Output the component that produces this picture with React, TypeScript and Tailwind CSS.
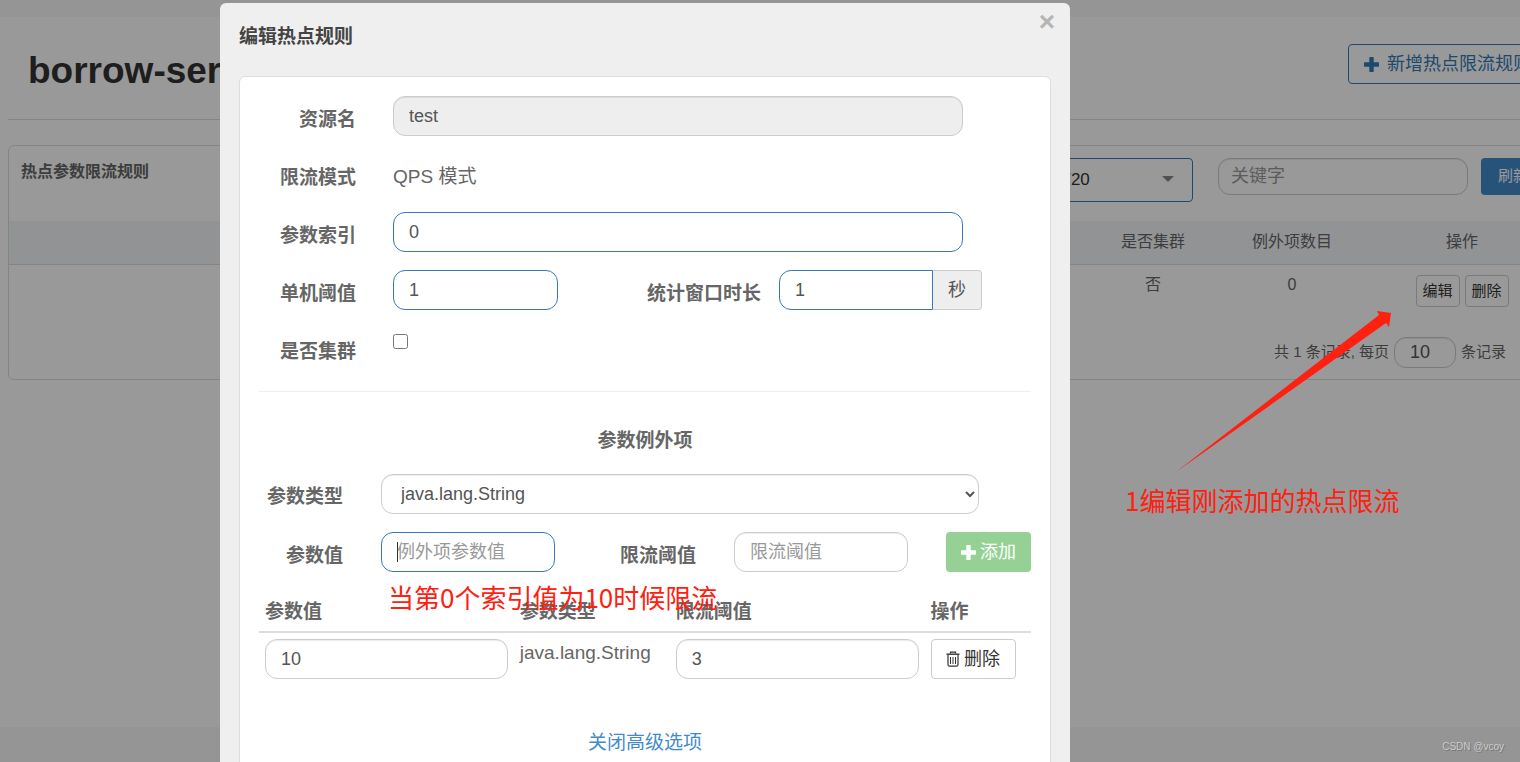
import type { FC, ReactNode } from "react";

const control =
  "h-10 rounded-xl border bg-white px-[15px] text-lg leading-6 text-[#555] outline-none placeholder:text-[#999]";
const plain = "border-[#ccc] shadow-[inset_0_1px_1px_rgba(0,0,0,0.075)]";
const active = "border-[#337ab7]";

const PlusIcon: FC = () => (
  <svg className="size-[15px] shrink-0" viewBox="0 0 15 15" fill="currentColor">
    <path d="M6 0h3a.7.7 0 0 1 .7.7v4.600h4.600a.7.7 0 0 1 .7.7v3a.7.7 0 0 1-.7.7H9.700v4.600a.7.7 0 0 1-.7.7H6a.7.7 0 0 1-.7-.7V9.700H.7A.7.7 0 0 1 0 9V6a.7.7 0 0 1 .7-.7h4.600V.7A.7.7 0 0 1 6 0z" />
  </svg>
);

const TrashIcon: FC = () => (
  <svg
    className="h-4 w-3.5 shrink-0"
    viewBox="0 0 14 16"
    fill="none"
    stroke="currentColor"
  >
    <path d="M4.500 2.500V1.200h5v1.300" strokeWidth="1.200" />
    <path d="M0.500 3.200h13" strokeWidth="1.400" />
    <path d="M2 4v9.700q0 1.500 1.500 1.500h7q1.500 0 1.500-1.500V4" strokeWidth="1.200" />
    <path d="M4.500 6v7M7 6v7M9.500 6v7" />
  </svg>
);

interface FormRowProps {
  label: string;
  htmlFor?: string;
  children: ReactNode;
}

const FormRow: FC<FormRowProps> = ({ label, htmlFor, children }) => (
  <div className="flex min-h-10 items-start gap-[37px]">
    <label
      htmlFor={htmlFor}
      className="w-[97px] shrink-0 pt-3 text-right font-bold"
    >
      {label}
    </label>
    {children}
  </div>
);

const RulesPage: FC = () => (
  <div className="h-full bg-[#f8f8f8] pt-[17px] pb-[35px]">
    <div className="h-full bg-white pl-2">
      <div className="-mr-[38px]">
        <header className="flex items-center justify-between border-b border-[#ddd] px-5 pt-[27px] pb-[35px]">
          <h1 className="h-10 text-[37px] leading-[54px] font-bold text-[#333]">
            borrow-service
          </h1>
          <button
            type="button"
            className="-mr-[9px] flex h-10 items-center gap-2 rounded border border-[#337ab7] px-[15px] text-lg text-[#337ab7]"
          >
            <PlusIcon />
            新增热点限流规则
          </button>
        </header>

        <section className="mt-[25px] rounded-md border border-[#ddd] text-base text-[#666]">
          <div className="flex h-[75px] items-start px-3 pt-3">
            <h2 className="mr-auto leading-7 font-bold">热点参数限流规则</h2>
            <div className="relative mr-[25px]">
              <select
                aria-label="机器"
                className="h-11 w-40 appearance-none rounded-sm border border-[#337ab7] pl-[18px] text-[17px] text-[#333]"
              >
                <option>8720</option>
              </select>
              <svg
                className="absolute top-[18px] right-[19px] h-1.5 w-3"
                viewBox="0 0 12 6"
                fill="#888"
              >
                <path d="M0 0h12L6 6z" />
              </svg>
            </div>
            <input
              aria-label="关键字"
              placeholder="关键字"
              className="mr-[13px] h-[37px] w-[250px] rounded-xl border border-[#ccc] px-3 text-lg shadow-[inset_0_1px_1px_rgba(0,0,0,0.075)] placeholder:text-[#999]"
            />
            <button
              type="button"
              className="h-[37px] w-16 rounded bg-[#428bca] text-[15px] text-white"
            >
              刷新
            </button>
          </div>

          <table className="w-full table-fixed text-center">
            <thead>
              <tr className="h-[43px] border-b border-[#ddd] bg-[#f3f5f9]">
                <th />
                <th className="w-32 font-normal">是否集群</th>
                <th className="w-[150px] font-normal">例外项数目</th>
                <th className="w-[190px] font-normal">操作</th>
              </tr>
            </thead>
            <tbody>
              <tr className="align-top leading-6">
                <td />
                <td className="pt-2">否</td>
                <td className="pt-2">0</td>
                <td className="pt-2.5">
                  <div className="flex justify-center gap-[5px]">
                    {["编辑", "删除"].map((action) => (
                      <button
                        key={action}
                        type="button"
                        className="h-8 w-11 rounded-sm border border-[#ccc] text-[15px] text-[#333]"
                      >
                        {action}
                      </button>
                    ))}
                  </div>
                </td>
              </tr>
            </tbody>
          </table>

          <div className="mt-[30px] mb-[11px] flex items-center justify-end gap-[5px] pr-[51px] text-[15px]">
            <span>共 1 条记录, 每页</span>
            <input
              aria-label="每页条数"
              defaultValue="10"
              className="h-[31px] w-[62px] rounded-xl border border-[#ccc] px-[15px] text-lg text-[#555] shadow-[inset_0_1px_1px_rgba(0,0,0,0.075)]"
            />
            <span>条记录</span>
          </div>
        </section>
      </div>
    </div>
  </div>
);

const ExceptionItems: FC = () => (
  <>
    <h4 className="mt-[37px] text-center font-bold">参数例外项</h4>

    <div className="mt-[21px] flex items-start gap-[38px]">
      <label
        htmlFor="paramType"
        className="w-[84px] shrink-0 pt-[11px] text-right font-bold"
      >
        参数类型
      </label>
      <select
        id="paramType"
        className={`${control} ${plain} mr-[52px] min-w-0 flex-1`}
      >
        <option>java.lang.String</option>
      </select>
    </div>

    <div className="mt-[18px] flex items-start gap-[38px]">
      <label
        htmlFor="paramValue"
        className="w-[84px] shrink-0 pt-3 text-right font-bold"
      >
        参数值
      </label>
      <div className="relative min-w-0 flex-1">
        <input
          id="paramValue"
          placeholder="例外项参数值"
          className={`${control} ${active} w-full`}
        />
        <span className="absolute top-2.5 left-4 h-5 w-px bg-[#333]" />
      </div>
      <label
        htmlFor="threshold"
        className="w-[103px] shrink-0 pt-3 text-right font-bold"
      >
        限流阈值
      </label>
      <div className="min-w-0 flex-1">
        <input
          id="threshold"
          placeholder="限流阈值"
          className={`${control} ${plain} w-full`}
        />
      </div>
      <button
        type="button"
        className="flex h-10 w-[85px] shrink-0 items-center justify-center gap-1 rounded bg-[#95d195] text-lg text-white"
      >
        <PlusIcon />
        添加
      </button>
    </div>

    <table className="mt-5 w-full table-fixed text-left">
      <thead>
        <tr className="border-b-2 border-[#ddd]">
          <th className="w-[33%] px-1.5 pt-2 pb-[7px]">参数值</th>
          <th className="w-[156px] px-1.5 pt-2 pb-[7px]">参数类型</th>
          <th className="w-[33%] px-1.5 pt-2 pb-[7px]">限流阈值</th>
          <th className="px-1.5 pt-2 pb-[7px]">操作</th>
        </tr>
      </thead>
      <tbody>
        <tr className="align-top">
          <td className="px-1.5 pt-1.5">
            <input
              aria-label="参数值"
              defaultValue="10"
              className={`${control} ${plain} w-full`}
            />
          </td>
          <td className="px-1.5 pt-2">java.lang.String</td>
          <td className="px-1.5 pt-1.5">
            <input
              aria-label="限流阈值"
              defaultValue="3"
              className={`${control} ${plain} w-full`}
            />
          </td>
          <td className="px-1.5 pt-1.5">
            <button
              type="button"
              className="flex h-10 w-[85px] items-center justify-center gap-1 rounded border border-[#ccc] text-lg text-[#333]"
            >
              <TrashIcon />
              删除
            </button>
          </td>
        </tr>
      </tbody>
    </table>
  </>
);

const EditRuleDialog: FC = () => (
  <div
    role="dialog"
    aria-labelledby="dialogTitle"
    className="w-full max-w-[850px] rounded-md bg-[#efefef] px-[19px] text-[19px] leading-6 text-[#666]"
  >
    <div className="flex items-start justify-between pt-[7px] pb-[27px]">
      <h3 id="dialogTitle" className="pt-[15px] font-bold text-[#444]">
        编辑热点规则
      </h3>
      <button
        type="button"
        aria-label="Close"
        className="-mr-1 text-[28px] leading-6 font-bold text-[#b5b5b5]"
      >
        ×
      </button>
    </div>

    <form className="rounded-md border border-[#ddd] bg-white p-[19px]">
      <div className="flex flex-col gap-[18px]">
        <FormRow label="资源名" htmlFor="resource">
          <input
            id="resource"
            readOnly
            value="test"
            className="mr-[68px] h-10 min-w-0 flex-1 rounded-xl border border-[#ccc] bg-[#eee] px-[15px] text-lg leading-6 text-[#555] shadow-[inset_0_1px_1px_rgba(0,0,0,0.075)]"
          />
        </FormRow>
        <FormRow label="限流模式">
          <p className="pt-[11px]">QPS 模式</p>
        </FormRow>
        <FormRow label="参数索引" htmlFor="paramIdx">
          <input
            id="paramIdx"
            defaultValue="0"
            className={`${control} ${active} mr-[68px] min-w-0 flex-1`}
          />
        </FormRow>
        <FormRow label="单机阈值" htmlFor="count">
          <input
            id="count"
            defaultValue="1"
            className={`${control} ${active} w-[165px]`}
          />
          <div className="mr-[49px] ml-auto flex">
            <label htmlFor="duration" className="pt-3 pr-[18px] font-bold">
              统计窗口时长
            </label>
            <input
              id="duration"
              defaultValue="1"
              className="h-10 w-[154px] rounded-l-xl border border-[#337ab7] px-[15px] text-lg text-[#555] outline-none"
            />
            <span className="flex h-10 w-[49px] items-center justify-center rounded-r border border-l-0 border-[#ccc] bg-[#eee] text-lg text-[#555]">
              秒
            </span>
          </div>
        </FormRow>
        <FormRow label="是否集群" htmlFor="cluster">
          <input id="cluster" type="checkbox" className="mt-1.5 size-[15px]" />
        </FormRow>
      </div>

      <hr className="mt-[23px] border-[#eee]" />

      <ExceptionItems />

      <div className="mt-[52px] pb-10 text-center">
        <a href="#basic" className="text-[#428bca]">
          关闭高级选项
        </a>
      </div>
    </form>
  </div>
);

const Annotations: FC = () => (
  <div className="pointer-events-none absolute inset-0 font-['Noto_Sans_CJK_SC',sans-serif] text-[26px] leading-8 text-[#ff2010]">
    <p className="absolute top-[581px] left-[388px]">
      当第0个索引值为10时候限流
    </p>
    <p className="absolute top-[484px] left-[1125px]">1编辑刚添加的热点限流</p>
    <svg
      className="absolute top-[310px] left-[1175px] h-[164px] w-[218px]"
      viewBox="0 0 218 164"
      fill="currentColor"
    >
      <path d="M1 162L204 5L202 1L216 3L214 17L211 13Z" />
    </svg>
    <span className="absolute right-4 bottom-[7px] font-['Liberation_Sans',sans-serif] text-[10px] leading-4 text-[#ccc] [text-shadow:1px_1px_0_#777]">
      CSDN @vcoy
    </span>
  </div>
);

const App: FC = () => (
  <main className="relative h-screen overflow-hidden font-['Liberation_Sans','Noto_Sans_CJK_SC',sans-serif]">
    <RulesPage />
    <div className="absolute inset-0 flex items-start justify-center bg-black/40 pt-[3px] pr-[230px]">
      <EditRuleDialog />
    </div>
    <Annotations />
  </main>
);

export default App;
